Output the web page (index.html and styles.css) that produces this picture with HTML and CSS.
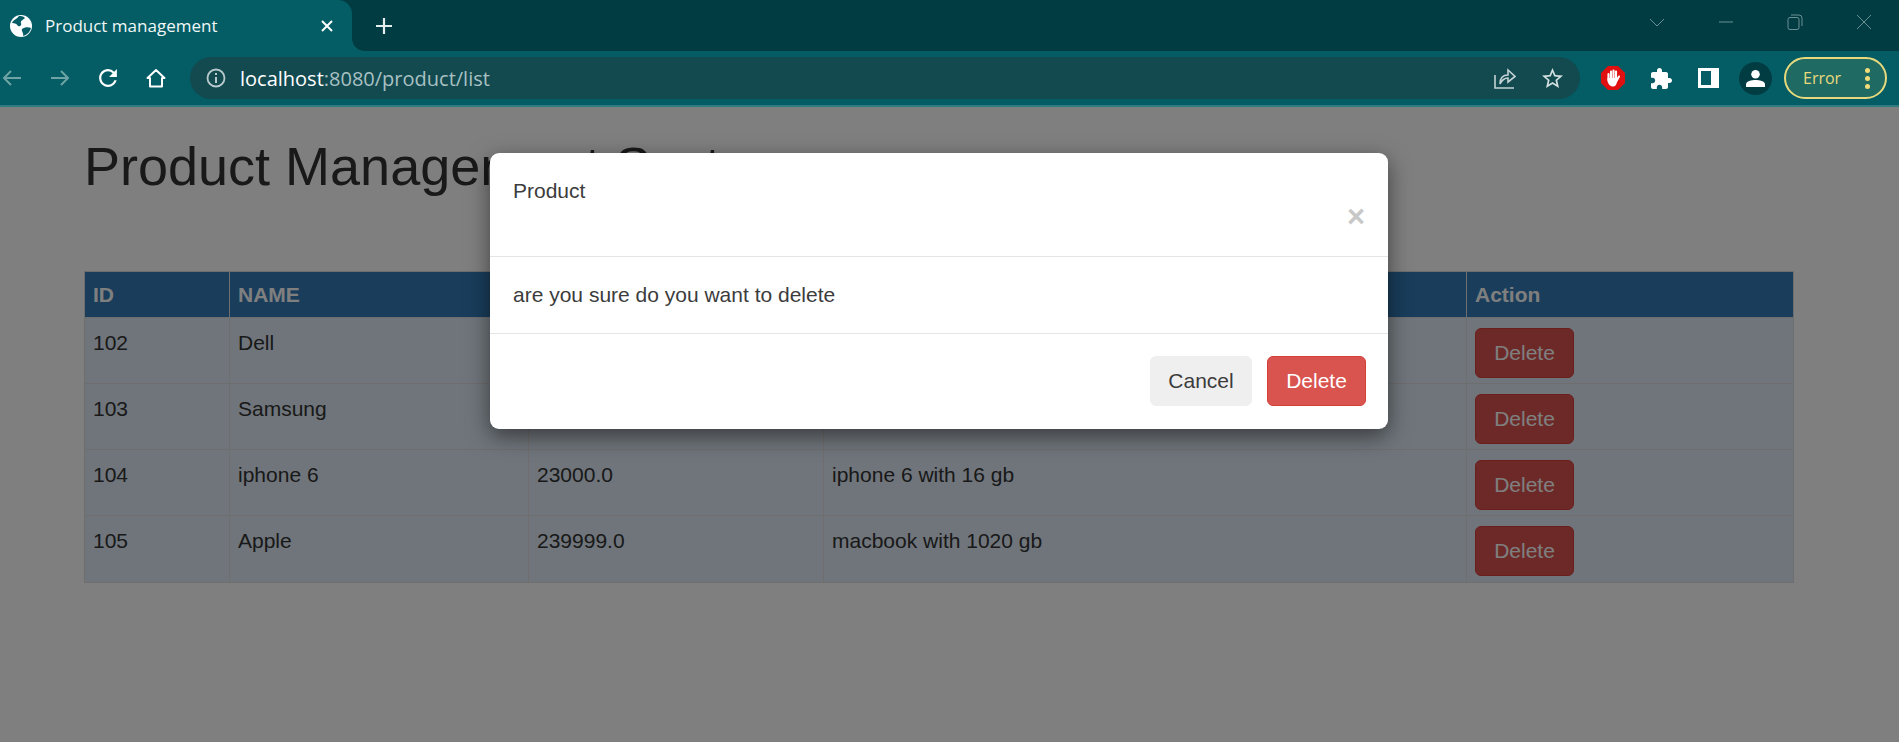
FILE: index.html
```html
<!DOCTYPE html>
<html lang="en">
<head>
    <meta charset="UTF-8">
    <title>Product management</title>
    <link rel="stylesheet" href="styles.css">
</head>
<body>
    <!-- Tab strip -->
    <div class="tab-strip">
        <div class="tab">
            <svg class="globe" viewBox="0 0 22 22">
                <circle cx="11" cy="11" r="11" fill="#fff"/>
                <path d="M9 1 C7 4 3 5 2 8 C5 8 7 9 8 11 C10 12 12 10 11 8 C10 6 13 5 15 3 C13 1 11 1 9 1Z" fill="#045c64"/>
                <path d="M12 14 C15 12 18 12 21 13 C20 17 17 20 13 21 C14 18 11 16 12 14Z" fill="#045c64"/>
            </svg>
            <span class="tab-title">Product management</span>
            <svg class="tab-close" viewBox="0 0 14 14"><path d="M2 2 L12 12 M12 2 L2 12" stroke="#fff" stroke-width="2"/></svg>
        </div>
        <svg class="new-tab" viewBox="0 0 18 18"><path d="M9 1 V17 M1 9 H17" stroke="#e4eeee" stroke-width="2.2"/></svg>
        <div class="window-controls">
            <svg viewBox="0 0 16 16"><path d="M1 5 L8 12 L15 5" class="win-line"/></svg>
            <svg viewBox="0 0 16 16"><path d="M1 8 H15" class="win-line"/></svg>
            <svg viewBox="0 0 16 16"><rect x="1" y="3.5" width="11" height="12" rx="2" class="win-line"/><path d="M4 1 H12 Q15 1 15 4 V12" class="win-line"/></svg>
            <svg viewBox="0 0 16 16"><path d="M1 1 L15 15 M15 1 L1 15" class="win-line"/></svg>
        </div>
    </div>

    <!-- Toolbar -->
    <div class="toolbar">
        <svg class="nav-icon nav-back" viewBox="0 0 20 20"><path d="M19 10 H2 M9 3 L2 10 L9 17" class="dim-line"/></svg>
        <svg class="nav-icon nav-forward" viewBox="0 0 20 20"><path d="M1 10 H18 M11 3 L18 10 L11 17" class="dim-line"/></svg>
        <svg class="nav-icon nav-reload" viewBox="3 3 18 18"><path fill="#fff" d="M17.65 6.35A7.958 7.958 0 0 0 12 4c-4.42 0-7.99 3.58-7.99 8s3.57 8 7.99 8c3.73 0 6.84-2.55 7.73-6h-2.08A5.99 5.99 0 0 1 12 18c-3.31 0-6-2.69-6-6s2.69-6 6-6c1.66 0 3.14.69 4.22 1.78L13 11h7V4l-2.35 2.35z"/></svg>
        <svg class="nav-icon nav-home" viewBox="0 0 20 20"><path d="M10 2 L1.5 10 H4 V18.5 H16 V10 H18.5 Z" fill="none" stroke="#fff" stroke-width="2" stroke-linejoin="round"/></svg>

        <div class="omnibox">
            <svg class="info-icon" viewBox="0 0 20 20">
                <circle cx="10" cy="10" r="8.5" fill="none" stroke="#b9cacc" stroke-width="1.8"/>
                <path d="M10 9 V15 M10 5 V7" stroke="#b9cacc" stroke-width="2"/>
            </svg>
            <span class="url"><span class="url-host">localhost</span>:8080/product/list</span>
            <svg class="omni-share" viewBox="0 0 22 22">
                <path d="M1 8 V21 H20 M6 17 C6 10 10 8 14 8 V3 L21 9.5 L14 15 V11 C10 11 8 13 6 17Z" fill="none" stroke="#c3d2d4" stroke-width="1.6"/>
            </svg>
            <svg class="omni-star" viewBox="2 2 20 20"><path fill="#d5e0e1" d="M22 9.24l-7.19-.62L12 2 9.19 8.63 2 9.24l5.46 4.73L5.82 21 12 17.27 18.18 21l-1.63-7.03L22 9.24zM12 15.4l-3.76 2.27 1-4.28-3.32-2.88 4.38-.38L12 6.1l1.71 4.04 4.38.38-3.32 2.88 1 4.28L12 15.4z"/></svg>
        </div>

        <svg class="ext-block" viewBox="0 0 24 24">
            <path d="M7 0 H17 L24 7 V17 L17 24 H7 L0 17 V7 Z" fill="#e01010"/>
            <path d="M7.5 8 V14 M10 5.5 V12 M12.5 4.5 V12 M15 5.5 V13 M15.5 15 L18 10.5" stroke="#fff" stroke-width="2.1" stroke-linecap="round" fill="none"/>
            <path d="M6.5 12 H16.5 L16 16 C15.5 19 14 20.5 12 20.5 C9.5 20.5 7.5 19 6.5 15 Z" fill="#fff"/>
        </svg>
        <svg class="ext-puzzle" viewBox="2 1 21 21"><path fill="#fff" d="M20.5 11H19V7c0-1.1-.9-2-2-2h-4V3.5C13 2.12 11.88 1 10.5 1S8 2.12 8 3.5V5H4c-1.1 0-1.99.9-1.99 2v3.8H3.5c1.49 0 2.7 1.21 2.7 2.7s-1.21 2.7-2.7 2.7H2V20c0 1.1.9 2 2 2h3.8v-1.5c0-1.49 1.21-2.7 2.7-2.7 1.49 0 2.7 1.21 2.7 2.7V22H17c1.1 0 2-.9 2-2v-4h1.5c1.38 0 2.5-1.12 2.5-2.5S21.88 11 20.5 11z"/></svg>
        <div class="side-panel"><span class="side-panel-hole"></span></div>
        <div class="avatar">
            <svg viewBox="0 0 20 20"><circle cx="10" cy="5.5" r="4.5" fill="#fff"/><path d="M0 19 V16 C0 12.5 6 11.5 10 11.5 C14 11.5 20 12.5 20 16 V19 Z" fill="#fff"/></svg>
        </div>
        <div class="error-pill">
            <span>Error</span>
            <span class="pill-dots"><i></i><i></i><i></i></span>
        </div>
    </div>
    <div class="toolbar-edge"></div>

    <!-- Page -->
    <div class="page">
        <h1 class="page-title">Product Management System</h1>

        <table class="product-table">
            <thead>
                <tr>
                    <th class="col-id">ID</th>
                    <th class="col-name">NAME</th>
                    <th class="col-price"></th>
                    <th class="col-desc"></th>
                    <th>Action</th>
                </tr>
            </thead>
            <tbody>
                <tr>
                    <td>102</td>
                    <td>Dell</td>
                    <td></td>
                    <td></td>
                    <td><button class="btn btn-danger">Delete</button></td>
                </tr>
                <tr>
                    <td>103</td>
                    <td>Samsung</td>
                    <td></td>
                    <td></td>
                    <td><button class="btn btn-danger">Delete</button></td>
                </tr>
                <tr>
                    <td>104</td>
                    <td>iphone 6</td>
                    <td>23000.0</td>
                    <td>iphone 6 with 16 gb</td>
                    <td><button class="btn btn-danger">Delete</button></td>
                </tr>
                <tr>
                    <td>105</td>
                    <td>Apple</td>
                    <td>239999.0</td>
                    <td>macbook with 1020 gb</td>
                    <td><button class="btn btn-danger">Delete</button></td>
                </tr>
            </tbody>
        </table>

        <!-- Delete dialog -->
        <div class="backdrop"></div>
        <div class="modal">
            <div class="modal-header">
                <div class="modal-title">Product</div>
                <span class="modal-close">&times;</span>
            </div>
            <div class="modal-body">are you sure do you want to delete</div>
            <div class="modal-footer">
                <button class="btn btn-default">Cancel</button>
                <button class="btn btn-danger">Delete</button>
            </div>
        </div>
    </div>
</body>
</html>
```

FILE: styles.css
```css
/* Reset and global styles */
* {
    margin: 0;
    padding: 0;
    box-sizing: border-box;
}

body {
    font-family: 'Liberation Sans', Arial, sans-serif;
    height: 100vh;
    display: flex;
    flex-direction: column;
    overflow: hidden;
    background: #fff;
    color: #333;
}

/* Tab strip */
.tab-strip {
    height: 51px;
    flex-shrink: 0;
    display: flex;
    align-items: center;
    background: #013c43;
}

.tab {
    position: relative;
    width: 352px;
    height: 51px;
    display: flex;
    align-items: center;
    padding-left: 10px;
    background: #045c64;
    border-top-right-radius: 14px;
}

.tab::after {
    content: '';
    position: absolute;
    left: 100%;
    bottom: 0;
    width: 12px;
    height: 12px;
    background: radial-gradient(circle at 100% 0, transparent 11.5px, #045c64 12px);
}

.globe {
    width: 22px;
    height: 22px;
}

.tab-title {
    margin-left: 13px;
    width: 275px;
    font-family: 'Open Sans', sans-serif;
    font-size: 17px;
    color: #f1f7f7;
}

.tab-close {
    width: 14px;
    height: 14px;
}

.new-tab {
    width: 18px;
    height: 18px;
    margin-left: 23px;
}

.window-controls {
    margin-left: auto;
    padding-right: 27px;
    display: flex;
    gap: 53px;
    align-self: flex-start;
    padding-top: 14px;
}

.window-controls svg {
    width: 16px;
    height: 16px;
}

.win-line {
    fill: none;
    stroke: #6d9094;
    stroke-width: 1;
}

/* Toolbar */
.toolbar {
    height: 54px;
    flex-shrink: 0;
    display: flex;
    align-items: center;
    background: #045c64;
}

.toolbar-edge {
    height: 2px;
    flex-shrink: 0;
    background: #2f7b82;
}

.nav-icon {
    width: 20px;
    height: 20px;
    flex-shrink: 0;
}

.dim-line {
    fill: none;
    stroke: #6fa3a6;
    stroke-width: 2;
}

.nav-back {
    margin-left: 2px;
}

.nav-forward,
.nav-reload,
.nav-home {
    margin-left: 28px;
}

.omnibox {
    width: 1390px;
    height: 42px;
    margin-left: 24px;
    padding-left: 16px;
    display: flex;
    align-items: center;
    flex-shrink: 0;
    border-radius: 21px;
    background: #124a50;
}

.info-icon {
    width: 20px;
    height: 20px;
    flex-shrink: 0;
}

.url {
    margin-left: 14px;
    font-family: 'Open Sans', sans-serif;
    font-size: 20px;
    color: #a9c0c2;
}

.url-host {
    color: #fff;
}

.omni-share {
    width: 22px;
    height: 22px;
    margin-left: auto;
}

.omni-star {
    width: 21px;
    height: 21px;
    margin-left: 26px;
    margin-right: 17px;
}

.ext-block {
    width: 24px;
    height: 24px;
    margin-left: 21px;
    flex-shrink: 0;
}

.ext-puzzle {
    width: 21px;
    height: 21px;
    margin-left: 26px;
    flex-shrink: 0;
}

.side-panel {
    width: 21px;
    height: 20px;
    margin-left: 26px;
    flex-shrink: 0;
    background: #fff;
    padding: 3px 8px 3px 3px;
}

.side-panel-hole {
    display: block;
    width: 100%;
    height: 100%;
    background: #045c64;
}

.avatar {
    width: 33px;
    height: 33px;
    margin-left: 20px;
    flex-shrink: 0;
    display: flex;
    align-items: center;
    justify-content: center;
    border-radius: 50%;
    background: #013c43;
}

.avatar svg {
    width: 19px;
    height: 19px;
}

.error-pill {
    width: 103px;
    height: 42px;
    margin-left: 12px;
    flex-shrink: 0;
    padding: 0 15px 0 17px;
    display: flex;
    align-items: center;
    justify-content: space-between;
    border: 2px solid #e8d97c;
    border-radius: 21px;
    background: #1f6a63;
    font-family: 'Open Sans', sans-serif;
    font-size: 16px;
    color: #e8d97c;
}

.pill-dots {
    display: flex;
    flex-direction: column;
    gap: 3px;
}

.pill-dots i {
    display: block;
    width: 5px;
    height: 5px;
    border-radius: 50%;
    background: #f0dc78;
}

/* Page */
.page {
    position: relative;
    flex: 1;
    padding: 30px 105px 0 84px;
}

.page-title {
    font-size: 54px;
    font-weight: 400;
    line-height: 59px;
    margin-bottom: 75px;
    color: #333;
}

/* Table */
.product-table {
    width: 100%;
    table-layout: fixed;
    border-collapse: collapse;
    font-size: 21px;
    line-height: 30px;
}

.product-table th,
.product-table td {
    padding: 10px 8px 5px;
    border: 1px solid #ddd;
    text-align: left;
    vertical-align: top;
}

.product-table th {
    padding: 8px 8px 7px;
    background: #337ab7;
    color: #fff;
    font-weight: 700;
}

.product-table td {
    background: #deeaf6;
}

.product-table tr:last-child td {
    padding-bottom: 6px;
}

.col-id {
    width: 145px;
}

.col-name {
    width: 299px;
}

.col-price {
    width: 295px;
}

.col-desc {
    width: 643px;
}

/* Buttons */
.btn {
    display: block;
    height: 50px;
    border-radius: 6px;
    border: 1px solid transparent;
    font-family: inherit;
    font-size: 21px;
    cursor: pointer;
}

.btn-danger {
    width: 99px;
    background: #d9534f;
    border-color: #d43f3a;
    color: #fff;
}

.btn-default {
    width: 102px;
    background: #efefef;
    border-color: #efefef;
    color: #3c3c3c;
}

/* Modal */
.backdrop {
    position: absolute;
    inset: 0;
    background: rgba(0, 0, 0, 0.5);
}

.modal {
    position: absolute;
    top: 46px;
    left: 490px;
    width: 898px;
    border-radius: 9px;
    background: #fff;
    box-shadow: 0 7px 22px rgba(0, 0, 0, 0.5);
    font-size: 21px;
    line-height: 30px;
    color: #3c3c3c;
}

.modal-header {
    display: flex;
    flex-direction: column;
    padding: 23px 23px 28px;
    border-bottom: 1px solid #e5e5e5;
}

.modal-close {
    align-self: flex-end;
    height: 22px;
    font-size: 31px;
    font-weight: 700;
    line-height: 22px;
    color: #c8c8c8;
}

.modal-body {
    padding: 23px;
}

.modal-footer {
    display: flex;
    justify-content: flex-end;
    gap: 15px;
    padding: 22px 22px 23px;
    border-top: 1px solid #e5e5e5;
}
```
